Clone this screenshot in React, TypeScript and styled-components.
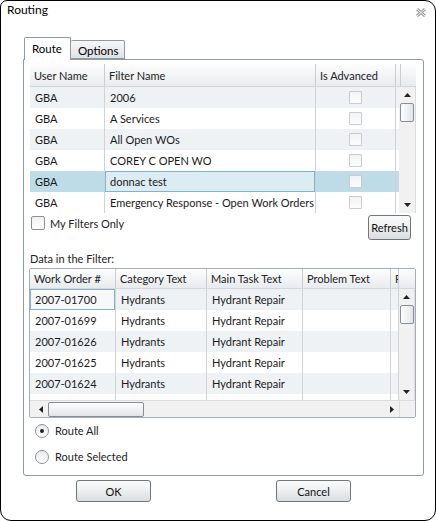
import React from "react";
import styled, { createGlobalStyle } from "styled-components";

const GlobalStyle = createGlobalStyle`
  html, body { margin: 0; padding: 0; background: #fff; }
  body {
    font-family: Lato, "Liberation Sans", sans-serif;
    font-size: 11px;
    color: #1c1c1c;
  }
  * { box-sizing: border-box; }
`;

const Window = styled.div`
  width: 436px;
  height: 521px;
  border: 1px solid #000;
  border-radius: 7px 11px 11px 11px;
  display: flex;
  flex-direction: column;
  overflow: hidden;
  background: #fff;
`;

const TitleBar = styled.div`
  height: 36px;
  display: flex;
  justify-content: space-between;
  align-items: flex-start;
  padding: 1px 9px 0 6px;
`;

const Title = styled.div`
  font-size: 12px;
  line-height: 16px;
  color: #000;
`;

const CloseIcon = styled.svg`
  margin-top: 6px;
`;

const Body = styled.div`
  padding: 0 11px 0 22px;
`;

const TabStrip = styled.div`
  height: 22px;
  display: flex;
  align-items: flex-end;
  padding-left: 1px;
`;

const Tab = styled.div<{ $active?: boolean }>`
  position: relative;
  z-index: ${(p) => (p.$active ? 2 : 1)};
  height: ${(p) => (p.$active ? "23px" : "19px")};
  margin-bottom: ${(p) => (p.$active ? "-1px" : "0")};
  padding: ${(p) => (p.$active ? "3px 8px 0 7px" : "2px 6px 0 7px")};
  border: 1px solid #8d99a3;
  border-bottom: ${(p) => (p.$active ? "none" : "1px solid #8d99a3")};
  border-left: ${(p) => (p.$active ? "1px solid #8d99a3" : "none")};
  border-radius: 2px 2px 0 0;
  background: ${(p) =>
    p.$active ? "#fff" : "linear-gradient(#f7f7f7, #dfe2e5)"};
  line-height: 15px;
  font-size: 11.5px;
  color: #000;
`;

const Panel = styled.div`
  height: 417px;
  border: 1px solid #8d99a3;
  border-radius: 0 3px 3px 3px;
  padding: 4px 6px 0 6px;
  display: flex;
  flex-direction: column;
`;

/* ---------- grids ---------- */

const FilterGrid = styled.div`
  width: 386px;
  height: 149px;
  display: flex;
  flex-direction: column;
  overflow: hidden;
`;

const DataGrid = styled.div`
  width: 387px;
  height: 150px;
  margin-left: -1px;
  border: 1px solid #a5adb5;
  border-radius: 2px;
  display: flex;
  flex-direction: column;
  overflow: hidden;
`;

const HeaderRow = styled.div<{ $h: number }>`
  height: ${(p) => p.$h}px;
  flex: none;
  display: flex;
  background: linear-gradient(#fdfdfd, #e8ebee);
  border-bottom: 1px solid #d3d7db;
`;

const HeaderCell = styled.div<{ $w: number }>`
  width: ${(p) => p.$w}px;
  flex: none;
  padding-left: 4px;
  display: flex;
  align-items: center;
  border-right: 1px solid #c9ced3;
  white-space: nowrap;
  overflow: hidden;
  color: #222;
`;

const HeaderFill = styled.div`
  flex: 1;
`;

const GridBody = styled.div`
  flex: 1;
  display: flex;
  min-height: 0;
`;

const Rows = styled.div`
  flex: 1;
  overflow: hidden;
`;

const Row = styled.div<{ $alt?: boolean; $selected?: boolean }>`
  height: 21px;
  display: flex;
  background: ${(p) =>
    p.$selected ? "#bddce8" : p.$alt ? "#eff2f5" : "#fff"};
`;

const Cell = styled.div<{ $w: number; $focus?: boolean; $center?: boolean }>`
  width: ${(p) => p.$w}px;
  flex: none;
  display: flex;
  align-items: center;
  justify-content: ${(p) => (p.$center ? "center" : "flex-start")};
  padding-left: ${(p) => (p.$center ? 0 : 5)}px;
  border-right: 1px solid #cfd3d7;
  white-space: nowrap;
  overflow: hidden;
  color: #1a1a1a;
  ${(p) =>
    p.$focus
      ? "box-shadow: inset 0 0 0 1px #7fb5c8; background: rgba(255,255,255,0.45);"
      : ""}
`;

const CellCheck = styled.div`
  width: 13px;
  height: 13px;
  border: 1px solid #c8ccd0;
  border-radius: 1px;
  background: linear-gradient(#f1f2f3, #fdfdfd);
`;

/* ---------- scrollbars ---------- */

const VScroll = styled.div<{ $w: number }>`
  width: ${(p) => p.$w}px;
  flex: none;
  background: #f1f1f1;
  border-right: 1px solid #dcdcdc;
  display: flex;
  flex-direction: column;
  align-items: center;
`;

const ArrowBox = styled.div`
  height: 16px;
  flex: none;
  display: flex;
  align-items: center;
  justify-content: center;
`;

const VThumb = styled.div`
  width: 14px;
  height: 19px;
  border: 1px solid #858f98;
  border-radius: 2px;
  background: linear-gradient(to right, #fdfdfd, #e2e5e8);
`;

const Spacer = styled.div`
  flex: 1;
`;

const HScrollRow = styled.div`
  height: 17px;
  flex: none;
  display: flex;
  border-top: 1px solid #dcdcdc;
`;

const HTrack = styled.div`
  width: 369px;
  display: flex;
  align-items: center;
  background: #f1f1f1;
  padding-left: 4px;
`;

const HArrowBox = styled.div`
  width: 14px;
  display: flex;
  align-items: center;
  justify-content: center;
`;

const HThumb = styled.div`
  width: 96px;
  height: 15px;
  border: 1px solid #858f98;
  border-radius: 2px;
  background: linear-gradient(#fdfdfd, #e2e5e8);
`;

const Corner = styled.div`
  flex: 1;
  background: #f1f1f1;
  border-left: 1px solid #dcdcdc;
`;

/* ---------- controls ---------- */

const FilterBar = styled.div`
  height: 28px;
  flex: none;
  display: flex;
  justify-content: space-between;
  align-items: flex-start;
`;

const CheckLabel = styled.label`
  display: flex;
  align-items: center;
  gap: 5px;
  margin: 3px 0 0 1px;
  color: #222;
`;

const Box = styled.span`
  width: 14px;
  height: 14px;
  border: 1px solid #8e9194;
  border-radius: 2px;
  background: linear-gradient(#f0f0f0, #fff);
`;

const Button = styled.button<{ $w: number; $h: number }>`
  width: ${(p) => p.$w}px;
  height: ${(p) => p.$h}px;
  padding: 0;
  border: 1px solid #727679;
  border-radius: 3px;
  background: linear-gradient(#fbfbfb 0%, #eceef0 50%, #dadde0 100%);
  font: inherit;
  color: #111;
`;

const RefreshButton = styled(Button)`
  margin: 2px 6px 0 0;
`;

const SectionLabel = styled.div`
  height: 27px;
  flex: none;
  padding-top: 10px;
  line-height: 16px;
  color: #222;
`;

const RadioGroup = styled.div`
  padding: 6px 0 0 5px;
  display: flex;
  flex-direction: column;
  gap: 13px;
`;

const RadioLabel = styled.label`
  display: flex;
  align-items: center;
  gap: 6px;
  height: 13px;
  color: #222;
`;

const RadioCircle = styled.span<{ $on?: boolean }>`
  width: 14px;
  height: 14px;
  border-radius: 50%;
  border: 1px solid #8e9194;
  background: linear-gradient(#e9eaeb, #fff);
  display: flex;
  align-items: center;
  justify-content: center;
  &::after {
    content: "";
    width: 4px;
    height: 4px;
    border-radius: 50%;
    background: ${(p) => (p.$on ? "#222" : "transparent")};
  }
`;

const Footer = styled.div`
  padding: 4px 0 0 53px;
  display: flex;
  gap: 125px;
`;

/* ---------- data ---------- */

const filters = [
  "2006",
  "A Services",
  "All Open WOs",
  "COREY C OPEN WO",
  "donnac test",
  "Emergency Response - Open Work Orders",
];

const workOrders = [
  "2007-01700",
  "2007-01699",
  "2007-01626",
  "2007-01625",
  "2007-01624",
  "",
];

const Arrow = ({ dir }: { dir: "up" | "down" | "left" | "right" }) => {
  const pts = {
    up: "0,4 7,4 3.5,0",
    down: "0,0 7,0 3.5,4",
    left: "4,0 4,7 0,3.5",
    right: "0,0 0,7 4,3.5",
  }[dir];
  const vertical = dir === "up" || dir === "down";
  return (
    <svg width={vertical ? 7 : 4} height={vertical ? 4 : 7}>
      <polygon points={pts} fill="#222" />
    </svg>
  );
};

export default function App() {
  return (
    <>
      <GlobalStyle />
      <Window>
        <TitleBar>
          <Title>Routing</Title>
          <CloseIcon width="10" height="9" viewBox="0 0 10 9">
            <path d="M1 1 L9 8 M9 1 L1 8" stroke="#a0a0a0" strokeWidth="3" />
            <path d="M1 1 L9 8 M9 1 L1 8" stroke="#f4f4f4" strokeWidth="1" />
          </CloseIcon>
        </TitleBar>
        <Body>
          <TabStrip>
            <Tab $active>Route</Tab>
            <Tab>Options</Tab>
          </TabStrip>
          <Panel>
            <FilterGrid>
              <HeaderRow $h={23}>
                <HeaderCell $w={75}>User Name</HeaderCell>
                <HeaderCell $w={211}>Filter Name</HeaderCell>
                <HeaderCell $w={80}>Is Advanced</HeaderCell>
                <HeaderCell $w={3} />
                <HeaderFill />
              </HeaderRow>
              <GridBody>
                <Rows>
                  {filters.map((f, i) => (
                    <Row key={f} $alt={i % 2 === 0} $selected={i === 4}>
                      <Cell $w={75}>GBA</Cell>
                      <Cell $w={211} $focus={i === 4}>
                        {f}
                      </Cell>
                      <Cell $w={80} $center>
                        <CellCheck />
                      </Cell>
                      <Cell $w={3} />
                    </Row>
                  ))}
                </Rows>
                <VScroll $w={17}>
                  <ArrowBox>
                    <Arrow dir="up" />
                  </ArrowBox>
                  <VThumb />
                  <Spacer />
                  <ArrowBox>
                    <Arrow dir="down" />
                  </ArrowBox>
                </VScroll>
              </GridBody>
            </FilterGrid>

            <FilterBar>
              <CheckLabel>
                <Box />
                My Filters Only
              </CheckLabel>
              <RefreshButton $w={43} $h={25}>
                Refresh
              </RefreshButton>
            </FilterBar>

            <SectionLabel>Data in the Filter:</SectionLabel>

            <DataGrid>
              <HeaderRow $h={20}>
                <HeaderCell $w={86}>Work Order #</HeaderCell>
                <HeaderCell $w={91}>Category Text</HeaderCell>
                <HeaderCell $w={96}>Main Task Text</HeaderCell>
                <HeaderCell $w={88}>Problem Text</HeaderCell>
                <HeaderCell $w={8}>Priority</HeaderCell>
                <HeaderFill />
              </HeaderRow>
              <GridBody>
                <Rows>
                  {workOrders.map((w, i) => (
                    <Row key={i} $alt={i % 2 === 0 && w !== ""}>
                      <Cell $w={86} $focus={i === 0}>
                        {w}
                      </Cell>
                      <Cell $w={91}>{w ? "Hydrants" : ""}</Cell>
                      <Cell $w={96}>{w ? "Hydrant Repair" : ""}</Cell>
                      <Cell $w={88} />
                      <Cell $w={8} />
                    </Row>
                  ))}
                </Rows>
                <VScroll $w={16}>
                  <ArrowBox>
                    <Arrow dir="up" />
                  </ArrowBox>
                  <VThumb />
                  <Spacer />
                  <ArrowBox>
                    <Arrow dir="down" />
                  </ArrowBox>
                </VScroll>
              </GridBody>
              <HScrollRow>
                <HTrack>
                  <HArrowBox>
                    <Arrow dir="left" />
                  </HArrowBox>
                  <HThumb />
                  <Spacer />
                  <HArrowBox>
                    <Arrow dir="right" />
                  </HArrowBox>
                </HTrack>
                <Corner />
              </HScrollRow>
            </DataGrid>

            <RadioGroup>
              <RadioLabel>
                <RadioCircle $on />
                Route All
              </RadioLabel>
              <RadioLabel>
                <RadioCircle />
                Route Selected
              </RadioLabel>
            </RadioGroup>
          </Panel>
          <Footer>
            <Button $w={75} $h={22}>
              OK
            </Button>
            <Button $w={75} $h={22}>
              Cancel
            </Button>
          </Footer>
        </Body>
      </Window>
    </>
  );
}
